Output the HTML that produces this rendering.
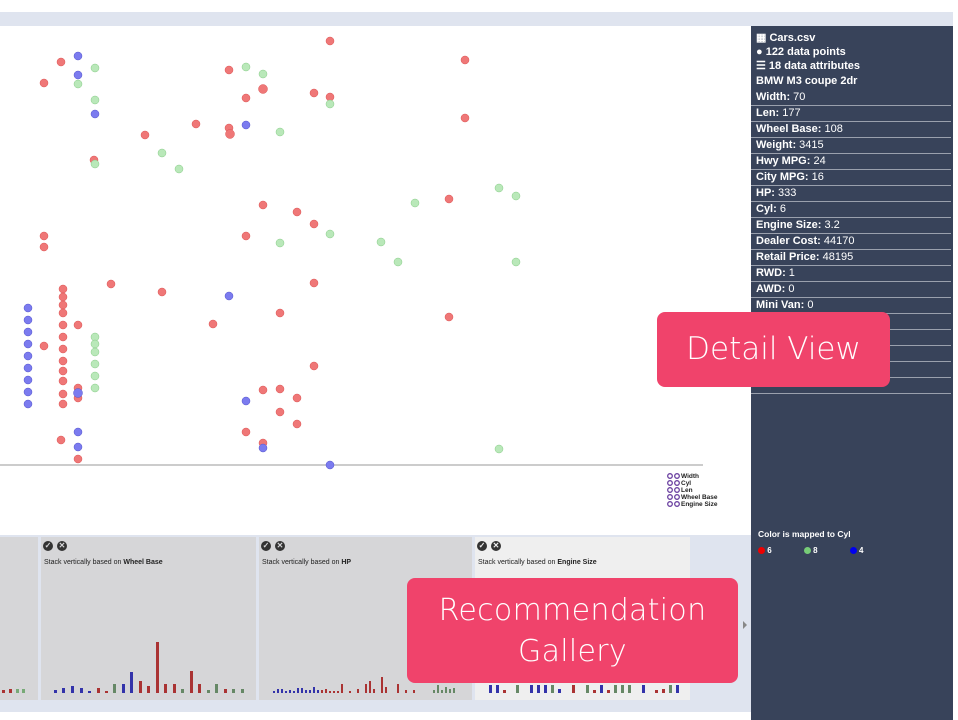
<!DOCTYPE html>
<html><head><meta charset="utf-8"><style>
body{margin:0;width:958px;height:720px;position:relative;overflow:hidden;background:#fff;font-family:"Liberation Sans",Arial,sans-serif}
.strip{position:absolute;background:#dfe4ef}
#panel{position:absolute;left:751px;top:26px;width:202px;height:694px;background:#38435a;color:#fff;font-size:11px}
#panel .h{font-weight:bold;padding-left:5px;height:14px;line-height:14px}
#panel .r{padding-left:5px;height:15px;line-height:15px;border-bottom:1px solid #9aa0ad;margin-right:2px}
#panel b{font-weight:bold}
.callout{position:absolute;background:#f0436b;color:#fff;border-radius:8px;text-align:center;font-family:"DejaVu Sans","Liberation Sans",sans-serif;font-weight:300}
.card{position:absolute;top:537px;height:163px;background:#d6d6d8}
.lbl{position:absolute;top:22px;left:3px;font-size:7px;color:#222}
.ic{position:absolute;top:4px;width:10px;height:10px;border-radius:50%;background:#333;color:#d6d6d8;font-size:8px;line-height:10px;text-align:center;font-weight:bold}
</style></head><body>
<div class="strip" style="left:0;top:12px;width:953px;height:14px"></div>
<div class="strip" style="left:0;top:535px;width:751px;height:177px"></div>
<svg style="position:absolute;left:0;top:26px" width="749" height="509">
<g transform="translate(0,-26)" stroke-width="0.5">
<line x1="0" y1="465" x2="703" y2="465" stroke="#bbb" stroke-width="1.5"/>
<g fill="#ef7777" stroke="#d55">
<circle cx="330" cy="41" r="4"/><circle cx="61" cy="62" r="4"/><circle cx="44" cy="83" r="4"/><circle cx="465" cy="60" r="4"/><circle cx="229" cy="70" r="4"/><circle cx="263" cy="89" r="4.5"/><circle cx="246" cy="98" r="4"/><circle cx="314" cy="93" r="4"/><circle cx="330" cy="97" r="4"/><circle cx="196" cy="124" r="4"/><circle cx="229" cy="128" r="4"/><circle cx="230" cy="134" r="4.5"/><circle cx="145" cy="135" r="4"/><circle cx="465" cy="118" r="4"/><circle cx="94" cy="160" r="4"/><circle cx="449" cy="199" r="4"/><circle cx="263" cy="205" r="4"/><circle cx="297" cy="212" r="4"/><circle cx="314" cy="224" r="4"/><circle cx="246" cy="236" r="4"/><circle cx="44" cy="236" r="4"/><circle cx="44" cy="247" r="4"/><circle cx="111" cy="284" r="4"/><circle cx="162" cy="292" r="4"/><circle cx="314" cy="283" r="4"/><circle cx="280" cy="313" r="4"/><circle cx="213" cy="324" r="4"/><circle cx="449" cy="317" r="4"/>
<circle cx="63" cy="289" r="4"/><circle cx="63" cy="297" r="4"/><circle cx="63" cy="305" r="4"/><circle cx="63" cy="313" r="4"/><circle cx="63" cy="325" r="4"/><circle cx="63" cy="337" r="4"/><circle cx="63" cy="349" r="4"/><circle cx="63" cy="361" r="4"/><circle cx="63" cy="371" r="4"/><circle cx="63" cy="381" r="4"/><circle cx="63" cy="394" r="4"/><circle cx="63" cy="404" r="4"/><circle cx="44" cy="346" r="4"/><circle cx="78" cy="325" r="4"/><circle cx="78" cy="388" r="4"/><circle cx="78" cy="398" r="4"/><circle cx="314" cy="366" r="4"/><circle cx="263" cy="390" r="4"/><circle cx="280" cy="389" r="4"/><circle cx="280" cy="412" r="4"/><circle cx="297" cy="398" r="4"/><circle cx="297" cy="424" r="4"/><circle cx="246" cy="432" r="4"/><circle cx="263" cy="443" r="4"/><circle cx="61" cy="440" r="4"/><circle cx="78" cy="459" r="4"/>
</g>
<g fill="#b9e8b9" stroke="#8c8">
<circle cx="95" cy="68" r="4"/><circle cx="78" cy="84" r="4"/><circle cx="246" cy="67" r="4"/><circle cx="263" cy="74" r="4"/><circle cx="330" cy="104" r="4"/><circle cx="95" cy="100" r="4"/><circle cx="280" cy="132" r="4"/><circle cx="162" cy="153" r="4"/><circle cx="179" cy="169" r="4"/><circle cx="95" cy="164" r="4"/><circle cx="499" cy="188" r="4"/><circle cx="516" cy="196" r="4"/><circle cx="415" cy="203" r="4"/><circle cx="330" cy="234" r="4"/><circle cx="280" cy="243" r="4"/><circle cx="381" cy="242" r="4"/><circle cx="398" cy="262" r="4"/><circle cx="516" cy="262" r="4"/><circle cx="95" cy="337" r="4"/><circle cx="95" cy="344" r="4"/><circle cx="95" cy="352" r="4"/><circle cx="95" cy="364" r="4"/><circle cx="95" cy="376" r="4"/><circle cx="95" cy="388" r="4"/><circle cx="499" cy="449" r="4"/>
</g>
<g fill="#7b7bef" stroke="#55c">
<circle cx="78" cy="56" r="4"/><circle cx="78" cy="75" r="4"/><circle cx="95" cy="114" r="4"/><circle cx="246" cy="125" r="4"/><circle cx="229" cy="296" r="4"/><circle cx="28" cy="308" r="4"/><circle cx="28" cy="320" r="4"/><circle cx="28" cy="332" r="4"/><circle cx="28" cy="344" r="4"/><circle cx="28" cy="356" r="4"/><circle cx="28" cy="368" r="4"/><circle cx="28" cy="380" r="4"/><circle cx="28" cy="392" r="4"/><circle cx="28" cy="404" r="4"/><circle cx="78" cy="393" r="4.5"/><circle cx="246" cy="401" r="4"/><circle cx="263" cy="448" r="4"/><circle cx="78" cy="432" r="4"/><circle cx="78" cy="447" r="4"/><circle cx="330" cy="465" r="4"/>
</g>
<g font-size="6.5" font-weight="bold" fill="#222" stroke="none">
<g fill="none" stroke="#6a3fa0" stroke-width="1.3">
<circle cx="670" cy="476" r="2.3"/><circle cx="677" cy="476" r="2.3"/><circle cx="670" cy="483" r="2.3"/><circle cx="677" cy="483" r="2.3"/><circle cx="670" cy="490" r="2.3"/><circle cx="677" cy="490" r="2.3"/><circle cx="670" cy="497" r="2.3"/><circle cx="677" cy="497" r="2.3"/><circle cx="670" cy="504" r="2.3"/><circle cx="677" cy="504" r="2.3"/></g>
<text x="681" y="478">Width</text><text x="681" y="485">Cyl</text><text x="681" y="492">Len</text><text x="681" y="499">Wheel Base</text><text x="681" y="506">Engine Size</text>
</g>
</g></svg>

<div class="card" style="left:0;width:38px"></div>
<div class="card" style="left:41px;width:215px"><div class="ic" style="left:2px">✓</div><div class="ic" style="left:16px">✕</div><div class="lbl">Stack vertically based on <b>Wheel Base</b></div></div>
<div class="card" style="left:259px;width:213px"><div class="ic" style="left:2px">✓</div><div class="ic" style="left:16px">✕</div><div class="lbl">Stack vertically based on <b>HP</b></div></div>
<div class="card" style="left:475px;width:215px;background:#efefef"><div class="ic" style="left:2px;color:#efefef">✓</div><div class="ic" style="left:16px;color:#efefef">✕</div><div class="lbl">Stack vertically based on <b>Engine Size</b></div></div>
<svg style="position:absolute;left:0;top:630px" width="700" height="65"><g transform="translate(0,-630)">
<g fill="#a33"><rect x="2" y="690" width="3" height="3"/><rect x="9" y="689" width="3" height="4"/></g>
<g fill="#7a7"><rect x="16" y="689" width="3" height="4"/><rect x="22" y="689" width="3" height="4"/></g>
<rect x="54" y="690" width="3" height="3" fill="#33a"/><rect x="62" y="688" width="3" height="5" fill="#33a"/><rect x="71" y="686" width="3" height="7" fill="#33a"/><rect x="80" y="688" width="3" height="5" fill="#33a"/><rect x="88" y="691" width="3" height="2" fill="#33a"/><rect x="97" y="688" width="3" height="5" fill="#a33"/><rect x="105" y="691" width="3" height="2" fill="#a33"/><rect x="113" y="684" width="3" height="9" fill="#686"/><rect x="122" y="684" width="3" height="9" fill="#33a"/><rect x="130" y="672" width="3" height="21" fill="#33a"/><rect x="139" y="681" width="3" height="12" fill="#a33"/><rect x="147" y="686" width="3" height="7" fill="#a33"/><rect x="156" y="642" width="3" height="51" fill="#a33"/><rect x="164" y="684" width="3" height="9" fill="#a33"/><rect x="173" y="684" width="3" height="9" fill="#a33"/><rect x="181" y="689" width="3" height="4" fill="#686"/><rect x="190" y="671" width="3" height="22" fill="#a33"/><rect x="198" y="684" width="3" height="9" fill="#a33"/><rect x="207" y="690" width="3" height="3" fill="#686"/><rect x="215" y="684" width="3" height="9" fill="#686"/><rect x="224" y="689" width="3" height="4" fill="#a33"/><rect x="232" y="689" width="3" height="4" fill="#686"/><rect x="241" y="689" width="3" height="4" fill="#686"/>
<g fill="#33a"><rect x="273" y="691" width="2" height="2"/><rect x="277" y="689" width="2" height="4"/><rect x="281" y="689" width="2" height="4"/><rect x="285" y="691" width="2" height="2"/><rect x="289" y="690" width="2" height="3"/><rect x="293" y="691" width="2" height="2"/><rect x="297" y="688" width="2" height="5"/><rect x="301" y="688" width="2" height="5"/><rect x="305" y="690" width="2" height="3"/><rect x="309" y="690" width="2" height="3"/><rect x="313" y="687" width="2" height="6"/><rect x="317" y="690" width="2" height="3"/></g>
<g fill="#a33"><rect x="321" y="690" width="2" height="3"/><rect x="325" y="689" width="2" height="4"/><rect x="329" y="691" width="2" height="2"/><rect x="333" y="691" width="2" height="2"/><rect x="337" y="691" width="2" height="2"/><rect x="341" y="684" width="2" height="9"/><rect x="349" y="691" width="2" height="2"/><rect x="357" y="689" width="2" height="4"/><rect x="365" y="684" width="2" height="9"/><rect x="369" y="681" width="2" height="12"/><rect x="373" y="689" width="2" height="4"/><rect x="381" y="677" width="2" height="16"/><rect x="385" y="687" width="2" height="6"/><rect x="397" y="684" width="2" height="9"/><rect x="405" y="690" width="2" height="3"/><rect x="413" y="690" width="2" height="3"/></g>
<g fill="#686"><rect x="433" y="690" width="2" height="3"/><rect x="437" y="685" width="2" height="8"/><rect x="441" y="690" width="2" height="3"/><rect x="445" y="687" width="2" height="6"/><rect x="449" y="689" width="2" height="4"/><rect x="453" y="688" width="2" height="5"/></g>
<g fill="#33a"><rect x="489" y="685" width="3" height="8"/><rect x="496" y="685" width="3" height="8"/><rect x="530" y="685" width="3" height="8"/><rect x="537" y="685" width="3" height="8"/><rect x="544" y="685" width="3" height="8"/><rect x="558" y="689" width="3" height="4"/><rect x="600" y="685" width="3" height="8"/><rect x="642" y="685" width="3" height="8"/><rect x="676" y="685" width="3" height="8"/></g>
<g fill="#686"><rect x="516" y="685" width="3" height="8"/><rect x="551" y="685" width="3" height="8"/><rect x="586" y="685" width="3" height="8"/><rect x="614" y="685" width="3" height="8"/><rect x="621" y="685" width="3" height="8"/><rect x="628" y="685" width="3" height="8"/><rect x="669" y="685" width="3" height="8"/></g>
<g fill="#a33"><rect x="503" y="690" width="3" height="3"/><rect x="572" y="685" width="3" height="8"/><rect x="593" y="690" width="3" height="3"/><rect x="607" y="690" width="3" height="3"/><rect x="655" y="690" width="3" height="3"/><rect x="662" y="689" width="3" height="4"/></g>
</g></svg>
<div style="position:absolute;left:743px;top:621px;width:0;height:0;border-left:4px solid #888;border-top:4px solid transparent;border-bottom:4px solid transparent"></div>

<div id="panel">
<div style="height:5px"></div>
<div class="h">▦ Cars.csv</div>
<div class="h">● 122 data points</div>
<div class="h">☰ 18 data attributes</div>
<div class="h" style="height:17px;line-height:17px">BMW M3 coupe 2dr</div>
<div class="r"><b>Width:</b> 70</div>
<div class="r"><b>Len:</b> 177</div>
<div class="r"><b>Wheel Base:</b> 108</div>
<div class="r"><b>Weight:</b> 3415</div>
<div class="r"><b>Hwy MPG:</b> 24</div>
<div class="r"><b>City MPG:</b> 16</div>
<div class="r"><b>HP:</b> 333</div>
<div class="r"><b>Cyl:</b> 6</div>
<div class="r"><b>Engine Size:</b> 3.2</div>
<div class="r"><b>Dealer Cost:</b> 44170</div>
<div class="r"><b>Retail Price:</b> 48195</div>
<div class="r"><b>RWD:</b> 1</div>
<div class="r"><b>AWD:</b> 0</div>
<div class="r"><b>Mini Van:</b> 0</div>
<div class="r">&nbsp;</div><div class="r">&nbsp;</div><div class="r">&nbsp;</div><div class="r">&nbsp;</div><div class="r">&nbsp;</div>
<div style="position:absolute;left:7px;top:503px;font-weight:bold;font-size:8.5px">Color is mapped to Cyl</div>
<div style="position:absolute;left:7px;top:520px;font-weight:bold;font-size:8px;width:190px">
<span style="display:inline-block;width:7px;height:7px;border-radius:50%;background:#e00;vertical-align:-1px"></span> 6
<span style="display:inline-block;width:7px;height:7px;border-radius:50%;background:#7c7;vertical-align:-1px;margin-left:30px"></span> 8
<span style="display:inline-block;width:7px;height:7px;border-radius:50%;background:#00e;vertical-align:-1px;margin-left:30px"></span> 4
</div>
</div>

<div class="callout" style="left:657px;top:312px;width:233px;height:75px;font-size:31px;line-height:75px">Detail View</div>
<div class="callout" style="left:407px;top:578px;width:331px;height:105px;font-size:30px;line-height:41px;padding-top:12px;box-sizing:border-box;letter-spacing:0.3px">Recommendation<br>Gallery</div>
</body></html>
